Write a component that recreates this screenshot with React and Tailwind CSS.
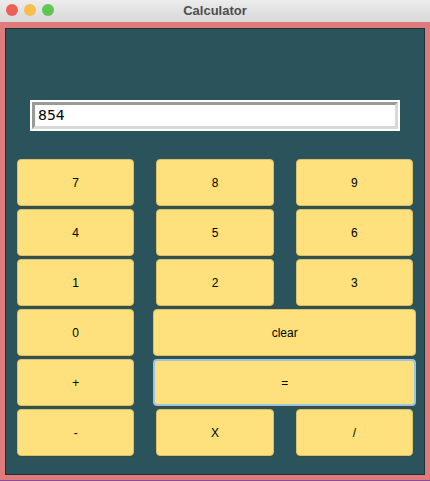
import React from 'react';

const keys = [
  { label: '7' }, { label: '8' }, { label: '9' },
  { label: '4' }, { label: '5' }, { label: '6' },
  { label: '1' }, { label: '2' }, { label: '3' },
  { label: '0' }, { label: 'clear', span: true },
  { label: '+' }, { label: '=', span: true, focused: true },
  { label: '-' }, { label: 'X' }, { label: '/' },
];

const Key = ({ label, span, focused }) => (
  <button
    className={
      'h-[47px] rounded-[4px] bg-[#fee07c] text-[12px] text-black shadow-[0_1px_0_#3d4a3a] ' +
      (span ? 'col-span-2 mx-[8px] ' : 'mx-[11px] ') +
      (focused ? 'border-2 border-[#9cc3e3]' : 'border border-[#d9c06a]')
    }
  >
    {label}
  </button>
);

const App = () => {
  return (
    <div className="w-[430px] h-[481px] flex flex-col bg-[#e07b7c] font-['Liberation_Sans',Arial,sans-serif]">
      <div className="relative h-[22px] flex items-center justify-center bg-gradient-to-b from-[#ececec] to-[#d8d8d8]">
        <div className="absolute left-[6px] top-[4px] flex gap-[6px]">
          <span className="w-[12px] h-[12px] rounded-full bg-[#ee5f58]" />
          <span className="w-[12px] h-[12px] rounded-full bg-[#f6bd4f]" />
          <span className="w-[12px] h-[12px] rounded-full bg-[#5fc650]" />
        </div>
        <span className="text-[13px] font-bold text-[#4d4d4d]">Calculator</span>
      </div>
      <div className="flex-1 flex flex-col pt-[6px] px-[5px] pb-[5px] border-b border-[#8b4aa0]">
        <div className="flex-1 border border-[#1c3236] bg-[#2b535b]">
          <div className="mt-[71px] ml-[24px] w-[370px] h-[31px] bg-white p-[2px]">
            <div className="h-full border-t-[3px] border-l-[3px] border-[#9a9a9a] border-r-[3px] border-r-[#d8d8d8] border-b-[3px] border-b-[#d8d8d8] flex items-center pl-[3px] text-[14px] text-black font-['DejaVu_Sans',sans-serif]">
              854
            </div>
          </div>
          <div className="mt-[28px] grid grid-cols-3 gap-y-[3px]">
            {keys.map((k) => (
              <Key key={k.label} {...k} />
            ))}
          </div>
        </div>
      </div>
    </div>
  );
};

export default App;
